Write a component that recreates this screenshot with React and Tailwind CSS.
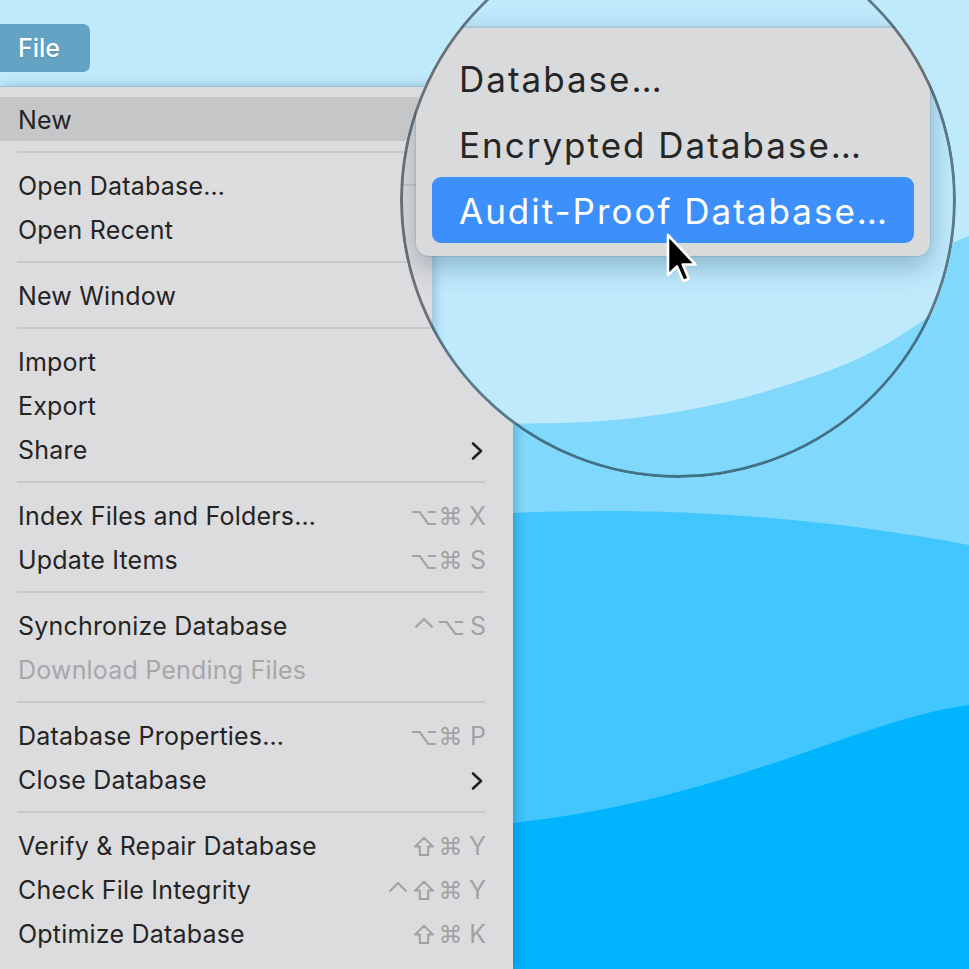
import React from "react";

const FONT = { fontFamily: "Inter, 'Noto Sans', sans-serif" };
const SYM = { fontFamily: "'DejaVu Sans', Inter, sans-serif" };

const items = [
  { t: "New", hl: true, sub: true },
  "sep",
  { t: "Open Database…" },
  { t: "Open Recent", sub: true },
  "sep",
  { t: "New Window" },
  "sep",
  { t: "Import" },
  { t: "Export" },
  { t: "Share", sub: true },
  "sep",
  { t: "Index Files and Folders…", k: ["opt", "cmd", "X"] },
  { t: "Update Items", k: ["opt", "cmd", "S"] },
  "sep",
  { t: "Synchronize Database", k: ["ctrl", "opt", "S"] },
  { t: "Download Pending Files", dis: true },
  "sep",
  { t: "Database Properties…", k: ["opt", "cmd", "P"] },
  { t: "Close Database", sub: true },
  "sep",
  { t: "Verify & Repair Database", k: ["shift", "cmd", "Y"] },
  { t: "Check File Integrity", k: ["ctrl", "shift", "cmd", "Y"] },
  { t: "Optimize Database", k: ["shift", "cmd", "K"] },
];

function Chevron() {
  return (
    <svg width="14" height="20" viewBox="0 0 14 20" className="mr-[2px]">
      <path d="M3 2.5 L11 10 L3 17.5" fill="none" stroke="#222" strokeWidth="2.6" strokeLinecap="round" strokeLinejoin="round" />
    </svg>
  );
}

function Sym({ s }) {
  if (s === "shift") {
    return (
      <span className="w-[26px] flex justify-center">
        <svg width="22" height="21" viewBox="0 0 22 21">
          <path d="M11 1.8 L20 10.6 H15.2 V19 H6.8 V10.6 H2 Z" fill="none" stroke="#a2a2a5" strokeWidth="2" strokeLinejoin="round" />
        </svg>
      </span>
    );
  }
  if (s === "ctrl") {
    return (
      <span className="w-[26px] flex justify-center">
        <svg width="20" height="22" viewBox="0 0 20 22">
          <path d="M1.5 11.5 L10 3 L18.5 11.5" fill="none" stroke="#a2a2a5" strokeWidth="2.1" strokeLinejoin="miter" />
        </svg>
      </span>
    );
  }
  const ch = s === "opt" ? "⌥" : "⌘";
  return <span className="w-[27px] text-center text-[24px]" style={SYM}>{ch}</span>;
}

function Keys({ k }) {
  return (
    <div className="flex items-center text-[25px] text-[#a2a2a5] tracking-normal">
      {k.map((c, i) =>
        i === k.length - 1 ? (
          <span key={i} className="w-[22px] text-right" style={FONT}>{c}</span>
        ) : (
          <Sym key={i} s={c} />
        )
      )}
    </div>
  );
}

function Menu() {
  return (
    <div className="relative z-10 flex-1 overflow-hidden bg-[#dcdcde] border-t border-[#9fc2d2] pt-[10px] shadow-[3px_0_10px_rgba(0,40,70,0.25)]" style={FONT}>
      {items.map((it, i) =>
        it === "sep" ? (
          <div key={i} className="h-[22px] flex items-center ml-[17px] mr-[28px]">
            <div className="h-[2px] w-full bg-[#c8c8ca]" />
          </div>
        ) : (
          <div
            key={i}
            className={
              "h-[44px] flex items-center justify-between pl-[18px] pr-[27px] pt-[3px] text-[25px] tracking-[0.2px] " +
              (it.hl ? "bg-[#c5c6c8] " : "") +
              (it.dis ? "text-[#a7a7a9]" : "text-[#242424]")
            }
          >
            <span>{it.t}</span>
            {it.k ? <Keys k={it.k} /> : it.sub ? <Chevron /> : null}
          </div>
        )
      )}
    </div>
  );
}

function Magnifier() {
  const sub = ["Database…", "Encrypted Database…", "Audit-Proof Database…"];
  return (
    <div className="absolute z-20 left-[400px] top-[-78px] w-[556px] h-[556px] rounded-full overflow-hidden">
      <div className="relative w-full h-full bg-[#bfeafc]">
        <svg className="absolute inset-0" width="556" height="556" viewBox="0 0 556 556">
          <path d="M0 503 L160 501 C 260 498, 340 481, 431 448 C 480 430, 520 402, 560 372 L560 560 L0 560 Z" fill="#80d9fc" />
        </svg>
        <div className="absolute left-0 top-[105px] w-[32px] h-[450px] bg-[#dcdcde] border-t border-[#a9c7d3] shadow-[4px_0_10px_rgba(0,50,80,0.2)]">
          <div className="mt-[156px] h-[2px] bg-[#c8c8ca]" />
        </div>
        <div
          className="absolute left-[16px] top-[105px] w-[514px] h-[229px] bg-[#d9dadb] rounded-b-[13px] rounded-t-[4px] border-t border-[#a9c7d3] shadow-[0_10px_28px_rgba(0,50,80,0.3),0_0_0_1px_rgba(0,0,0,0.08)] pt-[17px]"
          style={FONT}
        >
          {sub.map((s, i) => (
            <div
              key={i}
              className={
                "h-[66px] mx-[16px] pl-[27px] pt-[2px] flex items-center text-[35px] tracking-[2px] rounded-[9px] " +
                (i === 2 ? "bg-[#3d90fb] text-white" : "text-[#262626]")
              }
            >
              {s}
            </div>
          ))}
        </div>
        <svg className="absolute left-[265px] top-[310px]" width="36" height="56" viewBox="0 0 36 56">
          <path
            d="M3 3 V43 L12 34.5 L18.3 49 L23.8 46.8 L17.8 32.5 H30.5 Z"
            fill="#000"
            stroke="#fff"
            strokeWidth="2.6"
            strokeLinejoin="round"
          />
        </svg>
      </div>
      <div className="absolute inset-0 rounded-full border-[3px] border-[rgba(15,30,38,0.55)]" />
    </div>
  );
}

export default function App() {
  return (
    <div className="relative w-[969px] h-[969px] overflow-hidden bg-[#bfeafc] flex" style={FONT}>
      <div className="w-[513px] h-full flex flex-col">
        <div className="h-[86px] pt-[24px] shrink-0">
          <div className="w-[90px] h-[48px] bg-[#65a3c4] rounded-r-[7px] flex items-center pl-[18px] pt-[2px] text-white text-[25px] font-medium [text-shadow:0_1px_2px_rgba(0,0,0,0.15)]">
            File
          </div>
        </div>
        <Menu />
      </div>
      <div className="flex-1 h-full">
        <svg width="456" height="969" viewBox="0 0 456 969" className="block">
          <path d="M0 385 C 150 370, 300 300, 456 236 L456 969 L0 969 Z" fill="#80d9fd" />
          <path d="M0 513 C 140 507, 290 514, 456 545 L456 969 L0 969 Z" fill="#41c6fe" />
          <path d="M0 823 C 100 812, 180 790, 261 763 C 330 740, 400 712, 456 705 L456 969 L0 969 Z" fill="#00b4fe" />
        </svg>
      </div>
      <Magnifier />
    </div>
  );
}
